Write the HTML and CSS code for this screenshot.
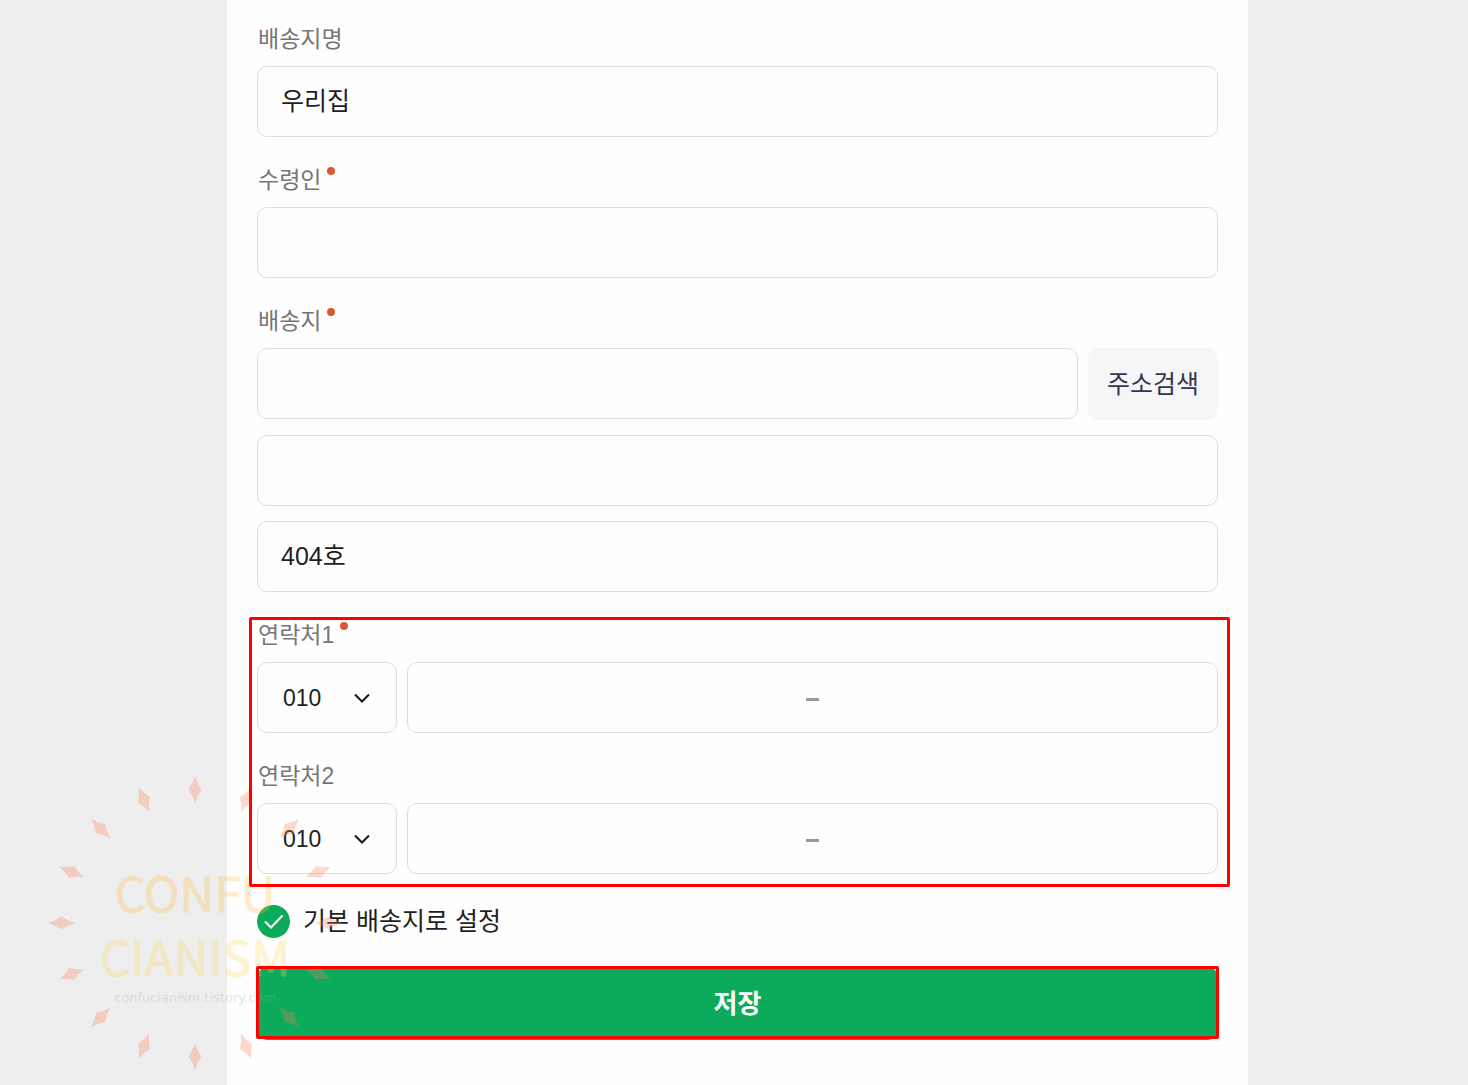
FILE: index.html
```
<!DOCTYPE html>
<html lang="ko">

<head>
    <meta charset="UTF-8">
    <meta name="viewport" content="width=device-width, initial-scale=1.0">
    <title>배송지 설정</title>
    <link rel="stylesheet" href="styles.css">
</head>

<body>
    <main class="container">
        <form class="address-form">
            <div class="field">
                <label class="field-label" for="placeName">배송지명</label>
                <input class="box" type="text" id="placeName" value="우리집">
            </div>

            <div class="field">
                <label class="field-label" for="receiver">수령인<span class="required"></span></label>
                <input class="box" type="text" id="receiver">
            </div>

            <div class="field">
                <label class="field-label" for="zipcode">배송지<span class="required"></span></label>
                <div class="address-lines">
                    <div class="row">
                        <input class="box" type="text" id="zipcode">
                        <button type="button" class="search-button">주소검색</button>
                    </div>
                    <input class="box" type="text" aria-label="주소">
                    <input class="box" type="text" aria-label="상세주소" value="404호">
                </div>
            </div>

            <div class="contacts">
                <div class="field">
                    <label class="field-label" for="phone1">연락처1<span class="required"></span></label>
                    <div class="row">
                        <div class="select-wrap">
                            <select class="box" id="phone1">
                                <option>010</option>
                            </select>
                            <svg class="arrow" viewBox="0 0 16 10"><path d="M1 1.5 L8 8.5 L15 1.5" /></svg>
                        </div>
                        <div class="box phone-box">
                            <input type="tel" aria-label="연락처1 가운데 번호">
                            <span class="dash"></span>
                            <input type="tel" aria-label="연락처1 끝 번호">
                        </div>
                    </div>
                </div>

                <div class="field">
                    <label class="field-label" for="phone2">연락처2</label>
                    <div class="row">
                        <div class="select-wrap">
                            <select class="box" id="phone2">
                                <option>010</option>
                            </select>
                            <svg class="arrow" viewBox="0 0 16 10"><path d="M1 1.5 L8 8.5 L15 1.5" /></svg>
                        </div>
                        <div class="box phone-box">
                            <input type="tel" aria-label="연락처2 가운데 번호">
                            <span class="dash"></span>
                            <input type="tel" aria-label="연락처2 끝 번호">
                        </div>
                    </div>
                </div>
                <div class="mark mark-contacts"></div>
            </div>

            <label class="default-check" for="isDefault">
                <input type="checkbox" id="isDefault" checked>
                <svg class="check-icon" viewBox="0 0 33 33">
                    <circle cx="16.5" cy="16.5" r="16.5" />
                    <path d="M8 16.5 L14 22.5 L25.5 10.5" />
                </svg>
                기본 배송지로 설정
            </label>

            <div class="save">
                <button type="submit" class="save-button">저장</button>
                <div class="mark mark-save"></div>
            </div>
        </form>

        <svg class="watermark" viewBox="-150 -150 300 300" aria-hidden="true">
            <defs>
                <path id="star" d="M0 -147 Q2.500 -139 6.500 -133.500 Q2.500 -128 0 -120 Q-2.500 -128 -6.500 -133.500 Q-2.500 -139 0 -147Z" />
            </defs>
            <g class="stars">
                <use href="#star" />
                <use href="#star" transform="rotate(22.500)" />
                <use href="#star" transform="rotate(45)" />
                <use href="#star" transform="rotate(67.500)" />
                <use href="#star" transform="rotate(90)" />
                <use href="#star" transform="rotate(112.500)" />
                <use href="#star" transform="rotate(135)" />
                <use href="#star" transform="rotate(157.500)" />
                <use href="#star" transform="rotate(180)" />
                <use href="#star" transform="rotate(202.500)" />
                <use href="#star" transform="rotate(225)" />
                <use href="#star" transform="rotate(247.500)" />
                <use href="#star" transform="rotate(270)" />
                <use href="#star" transform="rotate(292.500)" />
                <use href="#star" transform="rotate(315)" />
                <use href="#star" transform="rotate(337.500)" />
            </g>
            <text class="wm-title wm-orange" x="0" y="-11">CONFU</text>
            <text class="wm-title wm-yellow" x="0" y="53">CIANISM</text>
            <text class="wm-url" x="0" y="79">confucianism.tistory.com</text>
        </svg>
    </main>
</body>

</html>
```
FILE: styles.css
```
* {
    box-sizing: border-box;
}

body {
    margin: 0;
    padding: 0 220px 0 227px;
    background-color: #eee;
    font-family: "Liberation Sans", "Noto Sans CJK KR", sans-serif;
    color: #1e1e23;
}

input,
select,
button {
    font-family: inherit;
    color: inherit;
    margin: 0;
}

.container {
    position: relative;
    min-height: 100vh;
    padding: 24px 30px 45px;
    background-color: #fefefe;
}

.address-form,
.contacts {
    display: flex;
    flex-direction: column;
    gap: 28px;
}

.field {
    display: flex;
    flex-direction: column;
    align-items: stretch;
    gap: 12px;
}

.field-label {
    display: flex;
    align-items: flex-start;
    height: 30px;
    padding-left: 1px;
    font-size: 23px;
    line-height: 30px;
    color: #767678;
}

.required {
    width: 8px;
    height: 8px;
    margin: 2px 0 0 6px;
    border-radius: 50%;
    background-color: #dc5a32;
}

.box {
    width: 100%;
    height: 71px;
    padding: 0 23px 6px;
    border: 1px solid #dedede;
    border-radius: 10px;
    background-color: #fefefe;
    font-size: 25px;
}

.address-lines {
    display: flex;
    flex-direction: column;
    gap: 15px;
}

.row {
    display: flex;
    align-items: flex-start;
    gap: 10px;
}

.search-button {
    flex: none;
    width: 130px;
    height: 72px;
    padding: 0 0 4px;
    border: 0;
    border-radius: 10px;
    background-color: #f4f6f8;
    font-size: 25px;
    color: #363652;
}

.select-wrap {
    position: relative;
    flex: none;
    width: 140px;
}

select.box {
    display: block;
    appearance: none;
    padding: 0 25px;
    font-size: 23px;
}

.arrow {
    position: absolute;
    top: 31px;
    right: 27px;
    width: 16px;
    height: 10px;
    fill: none;
    stroke: #14191c;
    stroke-width: 2;
    pointer-events: none;
}

.phone-box {
    display: flex;
    align-items: center;
    padding: 0 23px;
}

.phone-box input {
    flex: 1;
    min-width: 0;
    border: 0;
    background: none;
    font-size: 23px;
}

.dash {
    width: 13px;
    height: 3px;
    margin-top: 3px;
    background-color: #999;
}

.contacts,
.save {
    position: relative;
}

/* red guide frames */
.mark {
    position: absolute;
    z-index: 2;
    border: 3px solid #f00;
    border-radius: 2px;
    pointer-events: none;
}

.mark-contacts {
    inset: -3px -12px -13px -8px;
}

.mark-save {
    inset: -1px -1px 1px -1px;
}

.default-check {
    position: relative;
    display: flex;
    align-items: flex-start;
    gap: 13px;
    height: 34px;
    margin-top: 3px;
    font-size: 25px;
    line-height: 32px;
}

.default-check input {
    position: absolute;
    width: 33px;
    height: 33px;
    opacity: 0;
}

.check-icon {
    width: 33px;
    height: 33px;
    fill: #0cab5c;
}

.check-icon path {
    fill: none;
    stroke: #fff;
    stroke-width: 2;
}

.save-button {
    display: block;
    width: 100%;
    height: 73px;
    padding-bottom: 6px;
    border: 0;
    border-radius: 10px;
    background-color: #0cab5c;
    font-size: 26px;
    font-weight: 700;
    color: #fff;
}

.watermark {
    position: absolute;
    top: 773px;
    left: -182px;
    width: 300px;
    height: 300px;
    opacity: 0.28;
    pointer-events: none;
}

.watermark text {
    text-anchor: middle;
}

.stars {
    fill: #ff7850;
}

.wm-title {
    font-family: "Noto Sans CJK KR", sans-serif;
    font-size: 48px;
    stroke-width: 1px;
}

.wm-orange {
    fill: #ffbc43;
    stroke: #ffbc43;
}

.wm-yellow {
    fill: #ffd75a;
    stroke: #ffd75a;
}

.wm-url {
    font-family: "DejaVu Sans", sans-serif;
    font-size: 13px;
    fill: #aaa;
}
```
